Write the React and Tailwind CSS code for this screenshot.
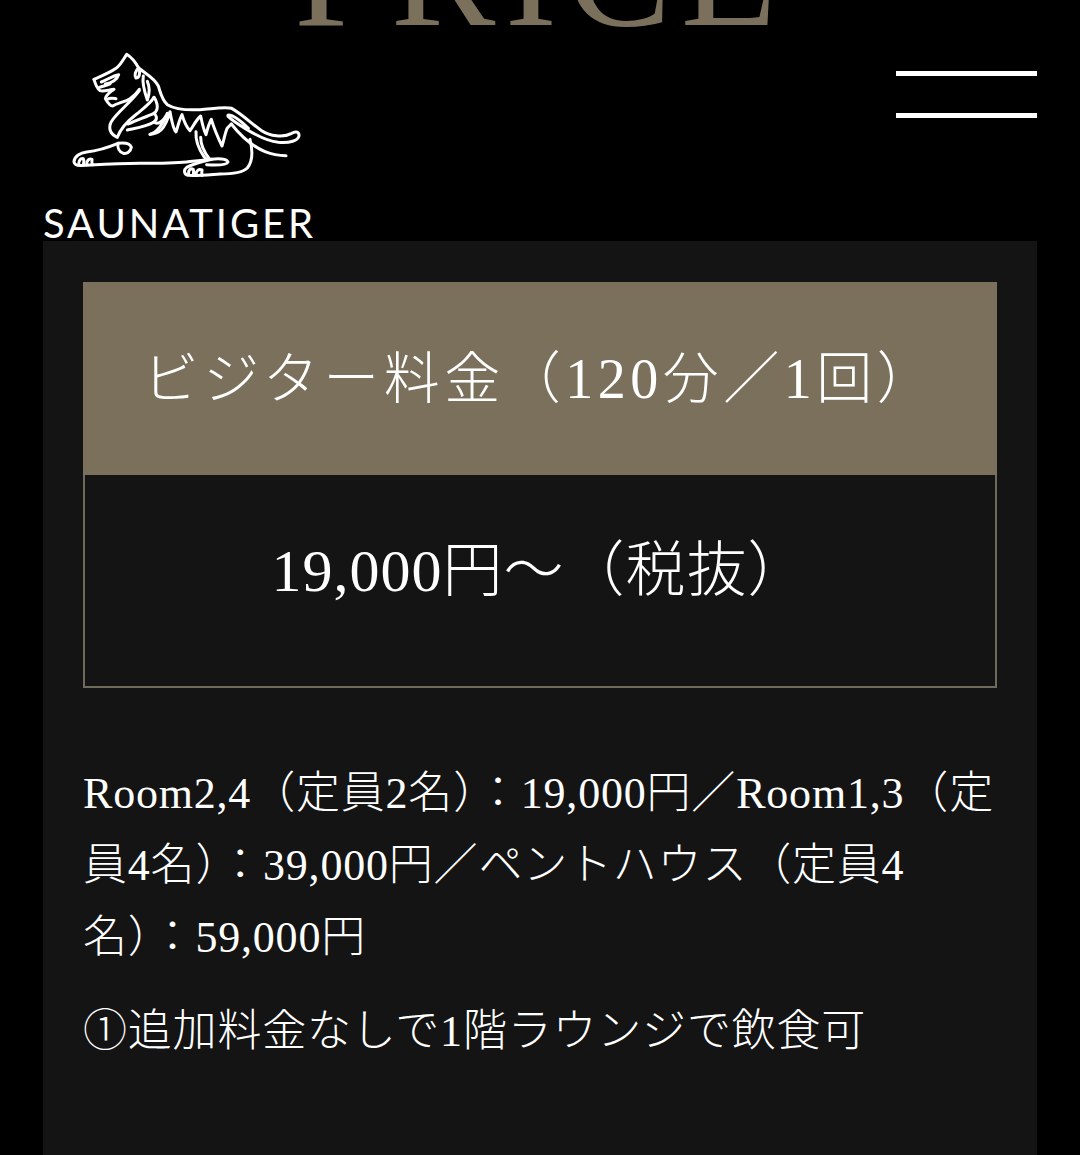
const serif = "font-['Liberation_Serif','Noto_Sans_CJK_JP',serif]";

function TigerLogo() {
  return (
    <svg
      width="232"
      height="130"
      viewBox="120 150 696 390"
      fill="none"
      stroke="white"
      strokeWidth="9"
      strokeLinecap="round"
      strokeLinejoin="round"
      aria-hidden="true"
    >
      {/* head and back, running out into the tail */}
      <path d="M192 238C215 228 240 218 258 205C272 195 280 178 290 163C305 172 318 190 326 204C345 220 372 232 385 258C392 280 396 300 412 314C435 328 470 331 510 329C545 327 580 320 605 325C640 345 665 372 695 392C720 408 760 414 785 400C798 392 808 396 807 408C804 422 780 430 745 427C700 422 650 390 610 362C600 354 590 348 595 345C610 345 635 365 655 385" />
      <path d="M604 372C630 405 665 438 705 455C725 463 750 467 768 467" />
      {/* face */}
      <path d="M192 238C196 252 202 266 210 272C222 276 240 268 252 268C240 276 228 284 226 296C232 306 240 318 248 318C265 308 285 306 300 296C312 288 322 278 328 268" />
      <path d="M214 246C230 240 250 226 266 224C262 238 246 250 226 252" />
      <path d="M208 262C220 258 232 256 240 252" />
      <path d="M232 298C240 292 248 294 258 296" />
      <path d="M326 204C316 212 312 226 318 234C328 234 332 220 326 204" />
      {/* mane */}
      <path d="M340 228C336 250 345 280 352 300C358 284 360 262 352 244" />
      <path d="M328 272C300 310 262 336 244 365C234 384 240 402 262 412C270 390 290 365 320 342C345 322 362 310 372 292" />
      <path d="M295 372C320 360 345 352 372 340C392 326 376 296 372 292" />
      <path d="M292 390C320 384 350 380 372 366C385 356 378 345 372 340" />
      {/* stripes */}
      <path d="M360 403C380 398 400 372 412 340C400 365 382 376 372 366" />
      <path d="M360 403C385 402 405 390 420 335C425 360 428 385 438 396C445 375 448 358 456 344C462 365 470 382 480 392C490 378 498 360 512 348C516 368 520 388 528 404C532 388 536 372 544 358C552 385 565 415 576 438C582 420 585 398 592 384L604 372" />
      {/* haunch and rear foot */}
      <path d="M660 418C668 450 668 484 652 504C636 520 605 522 570 522C540 524 500 528 474 526C462 524 460 510 470 502C490 492 520 484 545 478C565 475 590 476 594 486C590 496 560 496 530 494" />
      <path d="M498 395C496 425 508 450 522 470C526 476 530 478 534 478" />
      <path d="M512 412C512 436 525 460 538 476" />
      <path d="M476 522C474 510 482 504 490 508C492 516 490 522 490 526M498 524C498 512 506 506 516 510C516 518 514 522 516 526" />
      {/* front leg and paw */}
      <path d="M264 430C240 440 205 452 170 456C150 458 132 470 132 486C134 496 145 498 160 496C200 494 260 490 330 490C385 490 430 490 470 486C490 484 520 480 545 478" />
      <path d="M264 430C280 428 300 430 304 442C302 456 290 462 280 460C268 456 262 444 264 430" />
      <path d="M146 494C146 480 152 474 160 476C164 484 160 490 160 496M170 494C170 482 176 474 186 478C186 486 184 490 188 494" />
    </svg>
  );
}

function MenuIcon() {
  return (
    <div className="flex w-[141px] flex-col gap-[37px] pt-[21px]">
      <span className="block h-[5px] bg-white" />
      <span className="block h-[5px] bg-white" />
    </div>
  );
}

export default function App() {
  return (
    <div className={`flex h-[1155px] flex-col overflow-hidden bg-black text-white ${serif}`}>
      <div className="flex h-[27px] shrink-0 items-end justify-center overflow-hidden">
        <h2 className="mb-[-24px] text-[157px] leading-none tracking-[0.06em] whitespace-nowrap text-[#7b705c]">PRICE</h2>
      </div>

      <header className="mx-[43px] mt-[23px] flex h-[191px] shrink-0 items-start justify-between">
        <div className="flex w-[270px] flex-col items-start">
          <div className="ml-[27px]">
            <TigerLogo />
          </div>
          <span className="mt-[20px] font-['Lato',sans-serif] text-[40px] leading-[46px] tracking-[2.9px] whitespace-nowrap">
            SAUNATIGER
          </span>
        </div>
        <MenuIcon />
      </header>

      <main className="mx-[43px] flex-1 bg-[#141414] px-10 pt-[41px]">
        <h3 className="flex h-[193px] items-center justify-center bg-[#7b705c] text-[56px] font-light tracking-[4.5px] whitespace-nowrap">
          ビジター料金（120分／1回）
        </h3>
        <div className="flex h-[213px] items-center justify-center border-2 border-t-0 border-[#6f6a5e] pb-[20px] text-[60px] font-light tracking-[1px]">
          19,000円～（税抜）
        </div>
        <p className="mt-[70px] text-[44px] leading-[72px] font-light tracking-[0.8px]">
          Room2,4（定員2名）：19,000円／Room1,3（定員4名）：39,000円／ペントハウス（定員4名）：59,000円
        </p>
        <p className="mt-[22px] text-[44px] leading-[72px] font-light tracking-[0.8px]">①追加料金なしで1階ラウンジで飲食可</p>
      </main>
    </div>
  );
}
